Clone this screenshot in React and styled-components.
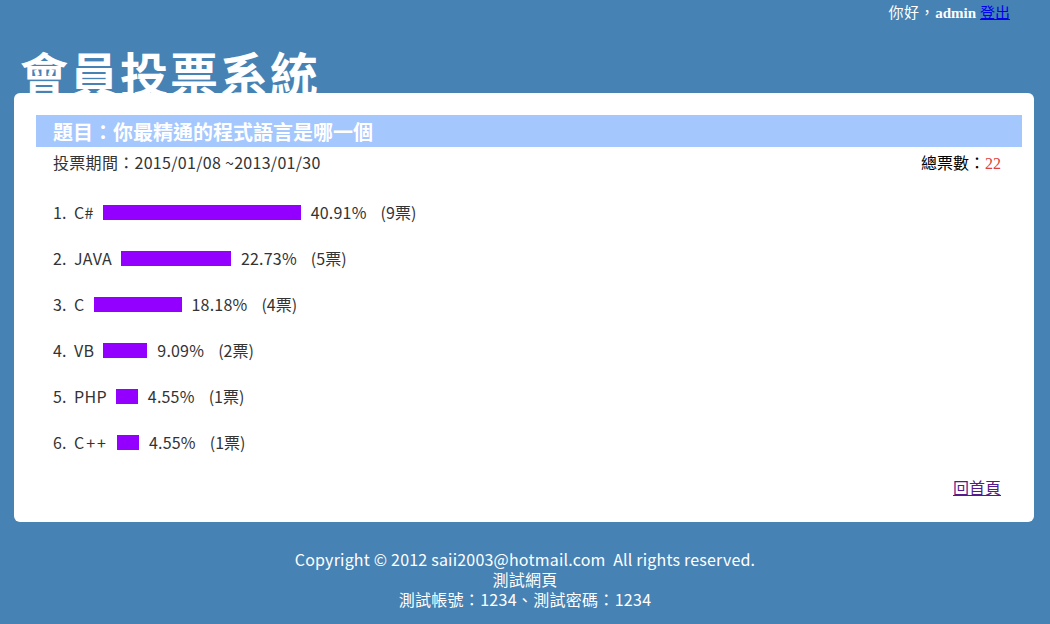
import React from "react";
import styled, { createGlobalStyle } from "styled-components";

const Global = createGlobalStyle`
  html, body { margin: 0; padding: 0; }
  body {
    background: #4682b4;
    font-family: "Noto Sans CJK TC", "Noto Sans", sans-serif;
  }
`;

const Page = styled.div`
  width: 1050px;
  min-height: 624px;
`;

const TopBar = styled.div`
  display: flex;
  justify-content: flex-end;
  align-items: baseline;
  gap: 4px;
  padding: 1px 40px 0 0;
  height: 22px;
  font-family: "Liberation Serif", "Noto Sans CJK TC", serif;
  font-size: 15px;
  color: #fff;
`;

const Greeting = styled.span`
  letter-spacing: 0.5px;
`;

const Admin = styled.b`
  font-weight: bold;
  letter-spacing: 0;
`;

const Logout = styled.a`
  color: #0000ee;
  text-decoration: underline;
`;

const Title = styled.h1`
  margin: 0 0 0 20px;
  height: 70px;
  font-family: "Noto Sans CJK TC", sans-serif;
  font-size: 48px;
  font-weight: bold;
  line-height: 98px;
  color: #fff;
  letter-spacing: 2px;
  white-space: nowrap;
`;

const Card = styled.div`
  position: relative;
  z-index: 1;
  margin: 0 16px 0 14px;
  padding: 22px 12px 22px 22px;
  background: #fff;
  border-radius: 6px;
  height: 429px;
  box-sizing: border-box;
  display: flex;
  flex-direction: column;
`;

const Band = styled.div`
  height: 32px;
  background: #a4c7fd;
  padding-left: 17px;
  display: flex;
  align-items: center;
  font-family: "Liberation Serif", "Noto Sans CJK TC", serif;
  font-weight: bold;
  font-size: 20px;
  color: #fff;
`;

const InfoRow = styled.div`
  display: flex;
  justify-content: space-between;
  align-items: center;
  height: 22px;
  margin-top: 4px;
  padding: 0 21px 0 17px;
  font-size: 16px;
  color: #333;
`;

const Period = styled.span`
  letter-spacing: 0.3px;
`;

const Total = styled.span`
  font-family: "Liberation Serif", "Noto Sans CJK TC", serif;
  font-size: 16px;
  color: #000;
`;

const TotalNum = styled.span`
  color: #e0403a;
`;

const List = styled.div`
  margin-top: 16px;
  padding-left: 17px;
  display: flex;
  flex-direction: column;
`;

const Row = styled.div`
  height: 46px;
  display: flex;
  align-items: center;
  font-size: 16px;
  color: #333;
`;

const Num = styled.span`
  width: 21px;
`;

const Name = styled.span`
  letter-spacing: ${(p) => (p.$spaced ? "2px" : "0.3px")};
`;

const Bar = styled.span`
  display: inline-block;
  height: 15px;
  background: #9400ff;
  margin-left: 9px;
`;

const Pct = styled.span`
  margin-left: 10px;
  letter-spacing: 0.2px;
`;

const Votes = styled.span`
  margin-left: 14px;
`;

const Bottom = styled.div`
  margin-top: auto;
  display: flex;
  justify-content: flex-end;
  padding-right: 21px;
  padding-bottom: 1px;
`;

const HomeLink = styled.a`
  font-family: "Liberation Serif", "Noto Sans CJK TC", serif;
  font-size: 16px;
  color: #551a8b;
  text-decoration: underline;
`;

const Footer = styled.footer`
  margin-top: 27px;
  display: flex;
  flex-direction: column;
  align-items: center;
  color: #fff;
  font-size: 16px;
`;

const FooterLine = styled.div`
  height: 20px;
  line-height: 20px;
  letter-spacing: ${(p) => (p.$wide ? "0.2px" : "0.3px")};
  white-space: nowrap;
`;

const items = [
  { name: "C#", pct: 40.91, votes: 9 },
  { name: "JAVA", pct: 22.73, votes: 5 },
  { name: "C", pct: 18.18, votes: 4 },
  { name: "VB", pct: 9.09, votes: 2 },
  { name: "PHP", pct: 4.55, votes: 1 },
  { name: "C++", pct: 4.55, votes: 1, spaced: true },
];

export default function App() {
  return (
    <Page>
      <Global />
      <TopBar>
        <Greeting>
          你好，<Admin>admin</Admin>
        </Greeting>
        <Logout href="#">登出</Logout>
      </TopBar>
      <Title>會員投票系統</Title>
      <Card>
        <Band>題目：你最精通的程式語言是哪一個</Band>
        <InfoRow>
          <Period>投票期間：2015/01/08 ~2013/01/30</Period>
          <Total>
            總票數：<TotalNum>22</TotalNum>
          </Total>
        </InfoRow>
        <List>
          {items.map((it, i) => (
            <Row key={i}>
              <Num>{i + 1}.</Num>
              <Name $spaced={it.spaced}>{it.name}</Name>
              <Bar style={{ width: `${Math.round(it.pct * 4.84)}px` }} />
              <Pct>{it.pct.toFixed(2)}%</Pct>
              <Votes>({it.votes}票)</Votes>
            </Row>
          ))}
        </List>
        <Bottom>
          <HomeLink href="#">回首頁</HomeLink>
        </Bottom>
      </Card>
      <Footer>
        <FooterLine $wide>Copyright © 2012 saii2003@hotmail.com&nbsp; All rights reserved.</FooterLine>
        <FooterLine>測試網頁</FooterLine>
        <FooterLine>測試帳號：1234、測試密碼：1234</FooterLine>
      </Footer>
    </Page>
  );
}
